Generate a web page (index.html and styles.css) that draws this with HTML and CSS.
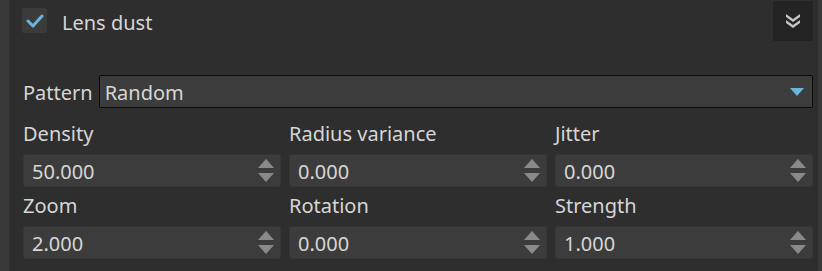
FILE: index.html
```html
<!DOCTYPE html>
<html lang="en">
<head>
    <meta charset="UTF-8">
    <meta name="viewport" content="width=device-width, initial-scale=1.0">
    <title>Lens dust</title>
    <link rel="stylesheet" href="styles.css">
</head>
<body>
    <div class="panel">
        <div class="header">
            <label class="check">
                <span class="box">
                    <svg width="18" height="14" viewBox="0 0 18 14"><path d="M2 7 L7 12 L16 2" fill="none" stroke="#6ab4dc" stroke-width="3" stroke-linecap="round" stroke-linejoin="round"/></svg>
                </span>
                <span class="title">Lens dust</span>
            </label>
            <button class="collapse">
                <svg width="16" height="16" viewBox="0 0 16 16"><path d="M1 1 L8 6 L15 1 L15 4 L8 9 L1 4 Z M1 7 L8 12 L15 7 L15 10 L8 15 L1 10 Z" fill="#c4c4c4"/></svg>
            </button>
        </div>

        <div class="pattern">
            <span class="label">Pattern</span>
            <div class="select">
                <span>Random</span>
                <span class="caret"></span>
            </div>
        </div>

        <div class="grid">
            <div class="field">
                <span class="label">Density</span>
                <div class="spin"><span>50.000</span><span class="arrows"><i class="up"></i><i class="down"></i></span></div>
            </div>
            <div class="field">
                <span class="label">Radius variance</span>
                <div class="spin"><span>0.000</span><span class="arrows"><i class="up"></i><i class="down"></i></span></div>
            </div>
            <div class="field">
                <span class="label">Jitter</span>
                <div class="spin"><span>0.000</span><span class="arrows"><i class="up"></i><i class="down"></i></span></div>
            </div>
            <div class="field">
                <span class="label">Zoom</span>
                <div class="spin"><span>2.000</span><span class="arrows"><i class="up"></i><i class="down"></i></span></div>
            </div>
            <div class="field">
                <span class="label">Rotation</span>
                <div class="spin"><span>0.000</span><span class="arrows"><i class="up"></i><i class="down"></i></span></div>
            </div>
            <div class="field">
                <span class="label">Strength</span>
                <div class="spin"><span>1.000</span><span class="arrows"><i class="up"></i><i class="down"></i></span></div>
            </div>
        </div>
    </div>
</body>
</html>
```

FILE: styles.css
```css
body {
    margin: 0;
    background-color: #393939;
    font-family: "Noto Sans", "Open Sans", sans-serif;
    font-size: 20px;
    color: #d6d6d6;
}

.panel {
    margin: 0 4px 0 9px;
    height: 271px;
    background-color: #2e2e2e;
    box-sizing: border-box;
    padding: 1px 5px 0 14px;
}

.header {
    display: flex;
    justify-content: space-between;
    align-items: flex-start;
    height: 74px;
}

.check {
    display: flex;
    align-items: center;
    margin-top: 5px;
    margin-left: -1px;
}

.box {
    width: 25px;
    height: 25px;
    background-color: #3b3b3b;
    border-radius: 2px;
    display: flex;
    align-items: center;
    justify-content: center;
}

.title {
    margin-left: 15px;
    line-height: 24px;
    padding-top: 5px;
}

.collapse {
    width: 40px;
    height: 40px;
    background-color: #232323;
    border: none;
    border-radius: 2px;
    padding: 0;
    display: flex;
    align-items: center;
    justify-content: center;
}

.label {
    line-height: 24px;
    padding-top: 2px;
}

.pattern {
    display: flex;
    align-items: center;
    gap: 6px;
}

.select {
    flex: 1;
    height: 33px;
    box-sizing: border-box;
    border: 1px solid #0c0c0c;
    border-radius: 2px;
    background-color: #3c3c3c;
    display: flex;
    align-items: center;
    justify-content: space-between;
    padding: 2px 8px 0 5px;
}

.caret {
    width: 0;
    height: 0;
    border-left: 7px solid transparent;
    border-right: 7px solid transparent;
    border-top: 8px solid #6cb4da;
    margin-top: -2px;
}

.grid {
    display: grid;
    grid-template-columns: 1fr 1fr 1fr;
    column-gap: 8px;
    row-gap: 5px;
    margin-top: 12px;
}

.field {
    display: flex;
    flex-direction: column;
    gap: 8px;
}

.spin {
    height: 33px;
    box-sizing: border-box;
    background-color: #3c3c3c;
    border: 1px solid #353535;
    border-radius: 2px;
    display: flex;
    align-items: center;
    justify-content: space-between;
    padding: 0 6px 0 8px;
}

.spin span:first-child {
    padding-top: 2px;
}

.arrows {
    display: flex;
    flex-direction: column;
    gap: 5px;
}

.arrows i {
    width: 0;
    height: 0;
    border-left: 8px solid transparent;
    border-right: 8px solid transparent;
}

.arrows .up {
    border-bottom: 9px solid #8a8a8a;
}

.arrows .down {
    border-top: 9px solid #8a8a8a;
}
```
